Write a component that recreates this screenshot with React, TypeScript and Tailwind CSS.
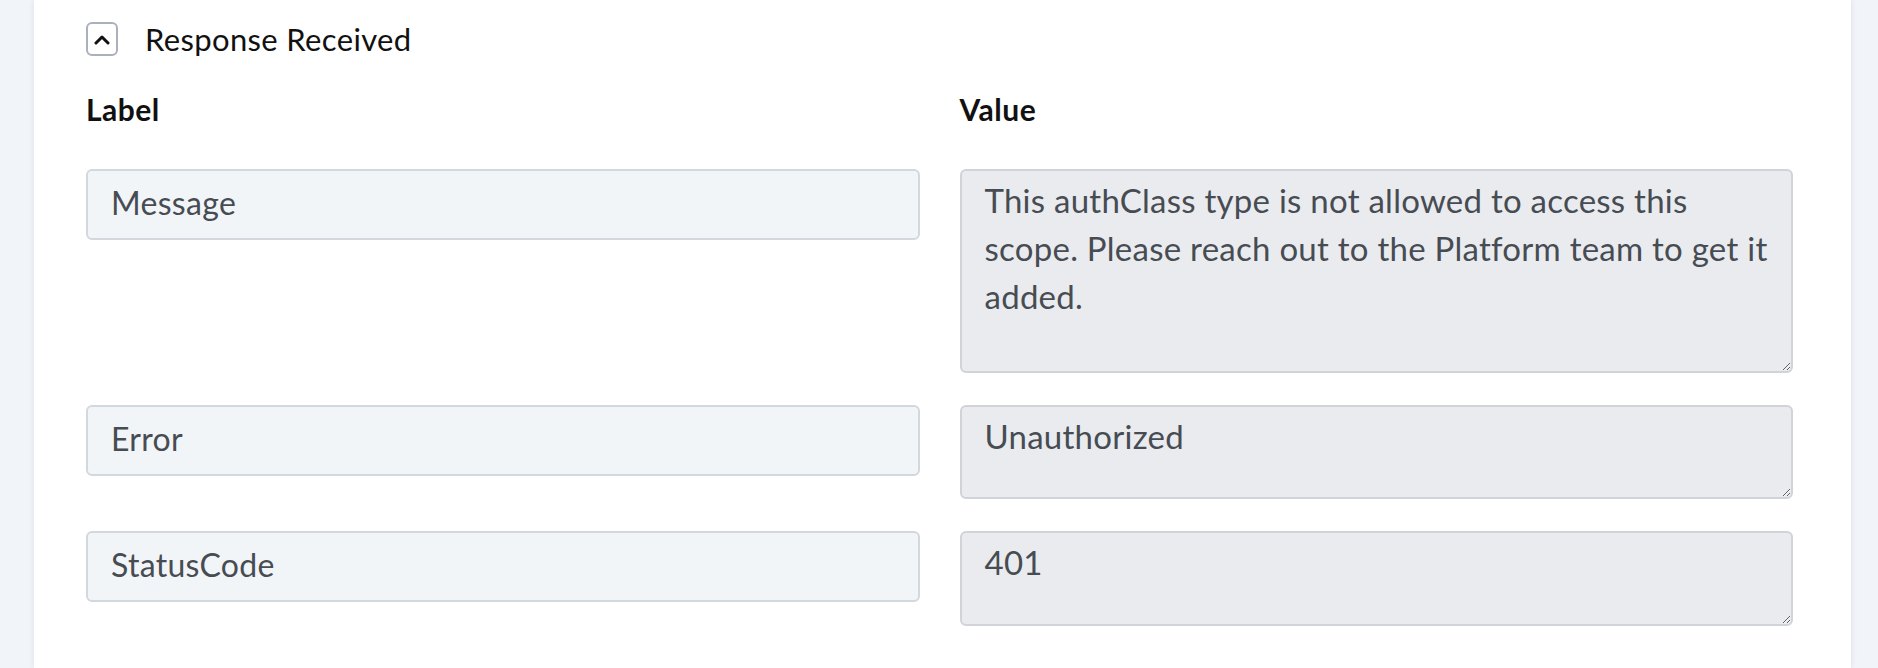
import React from "react";

const rows = [
  {
    label: "Message",
    value:
      "This authClass type is not allowed to access this scope. Please reach out to the Platform team to get it added.",
    h: "h-[204px]",
  },
  { label: "Error", value: "Unauthorized", h: "h-[94px]" },
  { label: "StatusCode", value: "401", h: "h-[95px]" },
];

export default function App() {
  return (
    <div
      className="w-[1878px] h-[668px] overflow-hidden bg-[#f1f4f8] pl-[34px] pr-[27px]"
      style={{ fontFamily: "Lato, 'Noto Sans', sans-serif" }}
    >
      <div className="h-full bg-white shadow-[0_0_6px_rgba(0,0,0,0.10)] pl-[52px] pr-[58px] pt-[22px]">
        <div className="flex items-center h-[34px]">
          <button className="w-[32px] h-[34px] rounded-[6px] border-2 border-[#aab1bd] flex items-center justify-center bg-white">
            <svg width="16" height="11" viewBox="0 0 16 11" fill="none">
              <polyline
                points="2,9 8,3 14,9"
                stroke="#111"
                strokeWidth="3"
                strokeLinecap="round"
                strokeLinejoin="round"
              />
            </svg>
          </button>
          <span className="ml-[27px] text-[31px] tracking-[0.35px] text-[#111] leading-none">
            Response Received
          </span>
        </div>
        <div className="grid grid-cols-2 gap-x-[40px] mt-[37px]">
          <div className="text-[30px] tracking-[0.5px] font-bold text-[#111] leading-[33px]">Label</div>
          <div className="text-[30px] tracking-[0.5px] font-bold text-[#111] leading-[33px]">Value</div>
        </div>
        <div className="flex flex-col gap-[32px] mt-[43px]">
          {rows.map((r) => (
            <div key={r.label} className="grid grid-cols-2 gap-x-[40px] items-start">
              <input
                readOnly
                value={r.label}
                className="h-[71px] w-full rounded-[6px] border-2 border-[#d3d8de] bg-[#f2f5f8] px-[23px] pb-[4px] text-[32px] tracking-[0.3px] text-[#474c53] outline-none"
                style={{ fontFamily: "Lato, 'Noto Sans', sans-serif" }}
              />
              <textarea
                readOnly
                value={r.value}
                className={`${r.h} w-full resize-y rounded-[6px] border-2 border-[#d0d4d9] bg-[#e9ebef] pl-[23px] pr-[12px] pt-[5px] text-[33px] tracking-[0.25px] leading-[48px] text-[#474c53] outline-none`}
                style={{ fontFamily: "Lato, 'Noto Sans', sans-serif" }}
              />
            </div>
          ))}
        </div>
      </div>
    </div>
  );
}
